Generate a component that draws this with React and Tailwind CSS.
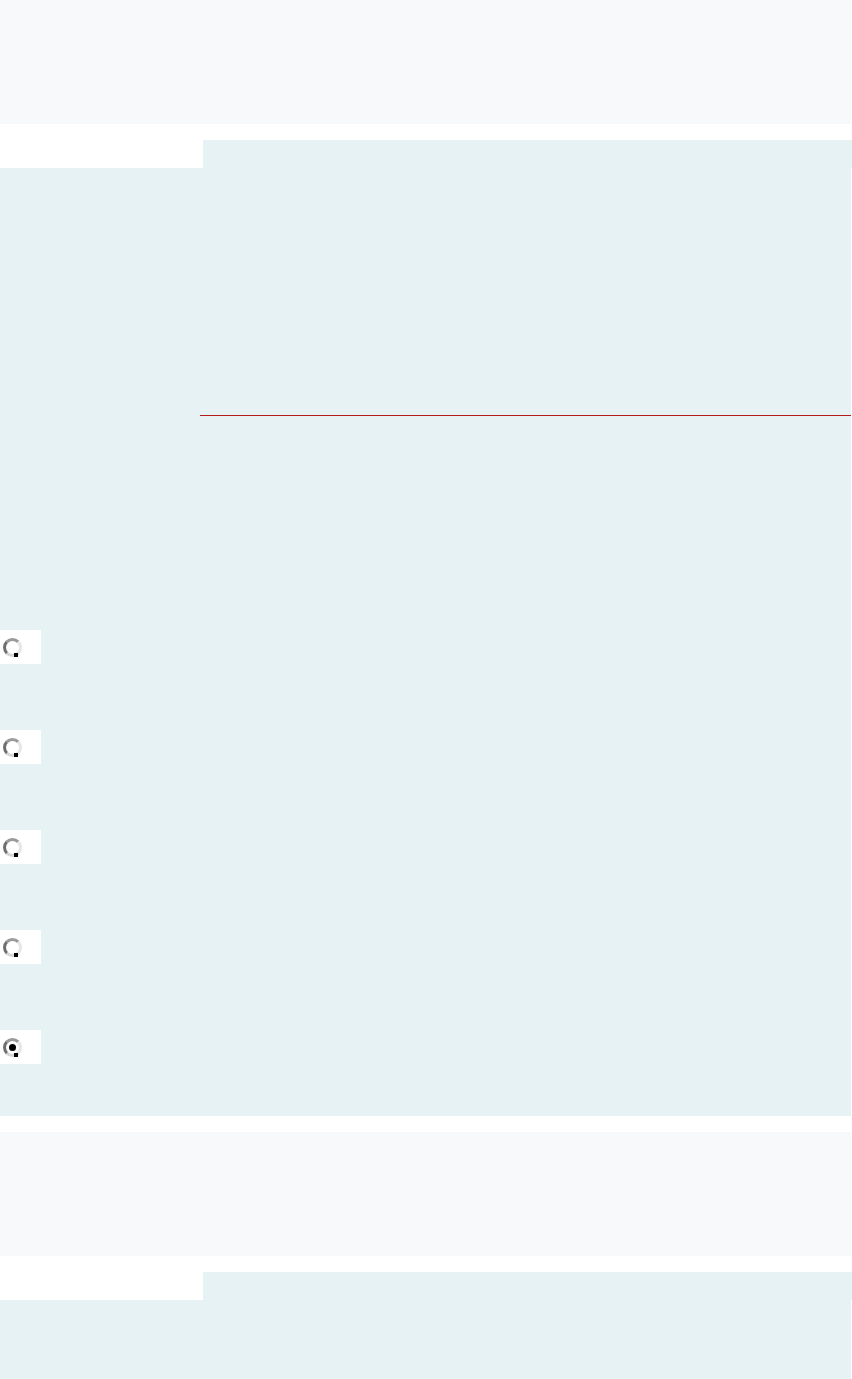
const Radio = ({ checked }) => (
  <div className="w-[41px] h-[34px] bg-white flex items-center pl-[3px]">
    <span className="relative w-[19px] h-[19px] rounded-full border-[3px] border-t-[#9a9a9a] border-l-[#6f6f6f] border-r-[#e6e6e6] border-b-[#d6d6d6] flex items-center justify-center">
      {checked && <span className="w-[7px] h-[7px] rounded-full bg-black" />}
      <span className="absolute right-[1px] bottom-[-3px] w-[4px] h-[4px] bg-black" />
    </span>
  </div>
)

const Section = ({ children, panelClass }) => (
  <>
    <div className="h-[124px] w-[851px] bg-[#f7f9fa]" />
    <div className="h-[16px]" />
    <div className="h-[28px] ml-[203px] bg-[#e6f2f3]" />
    <div className={`w-[851px] bg-[#e6f2f3] ${panelClass}`}>{children}</div>
  </>
)

export default function App() {
  const options = [false, false, false, false, true]

  return (
    <div className="w-[852px] min-h-[1379px] bg-white flex flex-col overflow-hidden">
      <Section panelClass="h-[948px] pt-[247px]">
        <div className="ml-[200px] h-px bg-[#b51c1c]" />
        <div className="mt-[214px] flex flex-col gap-[66px]">
          {options.map((checked, i) => (
            <Radio key={i} checked={checked} />
          ))}
        </div>
      </Section>
      <div className="h-[16px]" />
      <Section panelClass="h-[79px]" />
    </div>
  )
}
